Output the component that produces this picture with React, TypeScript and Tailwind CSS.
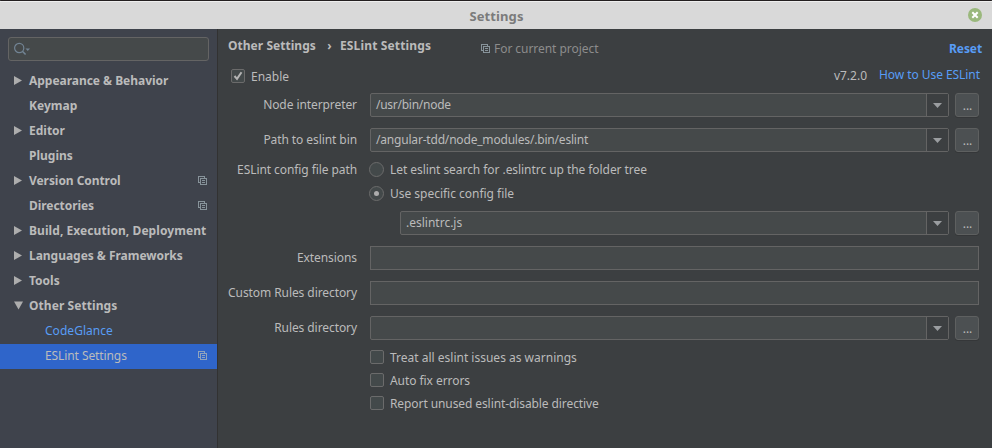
import React from "react";

function CopyIcon({ className = "" }: { className?: string }) {
  return (
    <svg className={`shrink-0 ${className}`} width="9" height="9" viewBox="0 0 9 9" fill="none" stroke="currentColor" shapeRendering="crispEdges">
      <path d="M2 6.5H0.5V0.5H6.5V2" />
      <rect x="2.5" y="2.5" width="6" height="6" />
      <path d="M4 4.5H7M4 6.5H7" />
    </svg>
  );
}

type Item = { label: string; arrow?: "right" | "down"; copy?: boolean; child?: boolean; selected?: boolean; tracking?: string };

const items: Item[] = [
  { label: "Appearance & Behavior", arrow: "right", tracking: "tracking-[-0.03px]" },
  { label: "Keymap" },
  { label: "Editor", arrow: "right" },
  { label: "Plugins" },
  { label: "Version Control", arrow: "right", copy: true, tracking: "tracking-[-0.06px]" },
  { label: "Directories", copy: true, tracking: "tracking-[-0.06px]" },
  { label: "Build, Execution, Deployment", arrow: "right", tracking: "tracking-[0.07px]" },
  { label: "Languages & Frameworks", arrow: "right", tracking: "tracking-[-0.03px]" },
  { label: "Tools", arrow: "right" },
  { label: "Other Settings", arrow: "down", tracking: "tracking-[0.07px]" },
  { label: "CodeGlance", child: true, tracking: "tracking-[0.04px]" },
  { label: "ESLint Settings", child: true, copy: true, selected: true, tracking: "tracking-[-0.09px]" },
];

function TreeRow({ item }: { item: Item }) {
  const color = item.child && !item.selected ? "text-[#589df6]" : "text-[#bbbbbb]";
  return (
    <div className={`flex h-[25px] items-center pb-0.5 pl-3.5 pr-[10px] ${item.selected ? "bg-[#2f65ca]" : ""}`}>
      <span className={`flex shrink-0 ${item.child ? "w-[31px]" : "w-[15px]"}`}>
        {item.arrow && (
          <svg width="9" height="9" viewBox="0 0 9 9" fill="#adadad">
            {item.arrow === "right" ? <path d="M0 0L8 4.5L0 9Z" /> : <path d="M0 0.5H9L4.5 8.5Z" />}
          </svg>
        )}
      </span>
      <span className={`grow whitespace-nowrap ${color} ${item.child ? "" : "font-bold"} ${item.tracking ?? ""}`}>{item.label}</span>
      {item.copy && <CopyIcon className={item.selected ? "text-[#8fa3bd]" : "text-[#87939a]"} />}
    </div>
  );
}

function Combo({ value = "", tracking = "" }: { value?: string; tracking?: string }) {
  return (
    <div className="flex grow gap-1.5">
      <div className="flex h-6 grow rounded-[2px] border border-[#646464] bg-[#45494a]">
        <span className={`flex grow items-center pl-[5px] ${tracking}`}>{value}</span>
        <span className="flex w-[22px] items-center justify-center border-l border-[#646464] bg-[#3c3f41]">
          <svg width="9" height="5" viewBox="0 0 9 5" fill="#9a9da0"><path d="M0 0H9L4.5 5Z" /></svg>
        </span>
      </div>
      <button className="flex h-6 w-6 items-center justify-center rounded-[3px] border border-[#5e6060] bg-[#4c5052] shadow-[0_1px_0_#353739]">
        <span className="pl-px pt-px">...</span>
      </button>
    </div>
  );
}

function Row({ label, children }: { label: string; children: React.ReactNode }) {
  return (
    <div className="mb-[11px] flex h-6 items-center">
      <label className="w-[129px] shrink-0 whitespace-nowrap text-right tracking-[-0.08px]">{label}</label>
      <div className="ml-[13px] flex grow">{children}</div>
    </div>
  );
}

function Check({ label, checked = false, tracking = "" }: { label: string; checked?: boolean; tracking?: string }) {
  return (
    <div className="flex h-[14px] items-center gap-1.5">
      <span className="h-[14px] w-[14px] shrink-0 rounded-[2px] border border-[#6b6b6b] bg-[#43494a]">
        {checked && (
          <svg width="12" height="12" viewBox="0 0 12 12" fill="none" stroke="#b4b4b4" strokeWidth="2"><path d="M2.5 6L5 8.8L9.5 2.3" /></svg>
        )}
      </span>
      <span className={`whitespace-nowrap pt-0.5 ${tracking}`}>{label}</span>
    </div>
  );
}

function Radio({ label, checked = false, tracking = "" }: { label: string; checked?: boolean; tracking?: string }) {
  return (
    <div className="flex h-[15px] items-center gap-1.5">
      <span className="flex h-[15px] w-[15px] shrink-0 items-center justify-center rounded-full border border-[#6b6b6b] bg-[#43494a]">
        {checked && <span className="h-[5px] w-[5px] rounded-full bg-[#adadad]" />}
      </span>
      <span className={`whitespace-nowrap ${tracking}`}>{label}</span>
    </div>
  );
}

export default function App() {
  return (
    <div className="flex h-[448px] w-[992px] flex-col overflow-hidden bg-[#3c3f41] font-['Noto_Sans',sans-serif] text-[12px] leading-4 text-[#bbbbbb]">
      <header className="flex h-[29px] shrink-0 items-center rounded-t-[1px] border-t border-[#231f20] bg-[#d9d9d9] pr-2.5 shadow-[inset_0_1px_0_#eeeeee]">
        <h1 className="grow pl-[25px] pt-0.5 text-center text-[13px] font-bold tracking-[0.1px] text-[#7b7b7b]">Settings</h1>
        <svg width="14" height="14" viewBox="0 0 14 14" className="shrink-0">
          <circle cx="7" cy="7" r="7" fill="#9ab87c" />
          <path d="M4.3 4.3L9.7 9.7M9.7 4.3L4.3 9.7" stroke="#fff" strokeWidth="2" />
        </svg>
      </header>
      <div className="flex grow">
        <aside className="w-[218px] shrink-0 border-r border-[#323232] bg-[#3f434c] pt-2">
          <div className="mb-2 ml-2 flex h-6 w-[201px] items-center rounded-[3px] border border-[#646464] bg-[#45494a] pl-[5px]">
            <svg width="17" height="14" viewBox="0 0 17 14" fill="none" stroke="#728494" strokeWidth="1.2">
              <circle cx="5.2" cy="6" r="4.6" />
              <path d="M8.4 9.3L11.6 12.5" strokeWidth="1.6" />
              <path d="M11.5 6.5H16L13.75 9Z" fill="#728494" stroke="none" />
            </svg>
          </div>
          {items.map((item) => <TreeRow key={item.label} item={item} />)}
        </aside>
        <main className="flex grow flex-col pl-[10px] pr-[13px] pt-[9px]">
          <div className="flex h-4 items-center">
            <span className="w-[88px] shrink-0 whitespace-nowrap font-bold tracking-[0.04px]">Other Settings</span>
            <span className="w-6 shrink-0 pl-[3px] text-center font-bold">›</span>
            <span className="w-[141px] shrink-0 whitespace-nowrap font-bold tracking-[0.14px]">ESLint Settings</span>
            <CopyIcon className="mt-[5px] text-[#87939a]" />
            <span className="ml-1 mt-1.5 grow tracking-[-0.05px] text-[#8c8c8c]">For current project</span>
            <a className="-mr-[3px] mt-1.5 font-bold tracking-[-0.1px] text-[#589df6]">Reset</a>
          </div>
          <div className="mb-[10px] mt-[15px] flex h-[14px] items-center pl-[3px]">
            <div className="grow"><Check label="Enable" checked /></div>
            <span className="mr-3">v7.2.0</span>
            <a className="-mr-px mb-0.5 tracking-[-0.06px] text-[#589df6]">How to Use ESLint</a>
          </div>
          <Row label="Node interpreter"><Combo value="/usr/bin/node" tracking="tracking-[-0.26px]" /></Row>
          <Row label="Path to eslint bin"><Combo value="/angular-tdd/node_modules/.bin/eslint" tracking="tracking-[-0.19px]" /></Row>
          <div className="-mt-px mb-[10px] flex">
            <label className="w-[129px] shrink-0 whitespace-nowrap text-right tracking-[-0.08px]">ESLint config file path</label>
            <div className="-ml-px flex flex-col gap-[9px] pl-[13px]">
              <Radio label="Let eslint search for .eslintrc up the folder tree" tracking="tracking-[-0.06px]" />
              <Radio label="Use specific config file" checked tracking="tracking-[-0.02px]" />
            </div>
          </div>
          <div className="mb-[11px] ml-[172px] flex"><Combo value=".eslintrc.js" /></div>
          <Row label="Extensions"><div className="h-6 grow border border-[#646464] bg-[#45494a]" /></Row>
          <Row label="Custom Rules directory"><div className="h-6 grow border border-[#646464] bg-[#45494a]" /></Row>
          <Row label="Rules directory"><Combo /></Row>
          <div className="-mt-px ml-[142px] flex flex-col gap-[9px]">
            <Check label="Treat all eslint issues as warnings" />
            <Check label="Auto fix errors" tracking="tracking-[-0.06px]" />
            <Check label="Report unused eslint-disable directive" tracking="tracking-[-0.09px]" />
          </div>
        </main>
      </div>
    </div>
  );
}
